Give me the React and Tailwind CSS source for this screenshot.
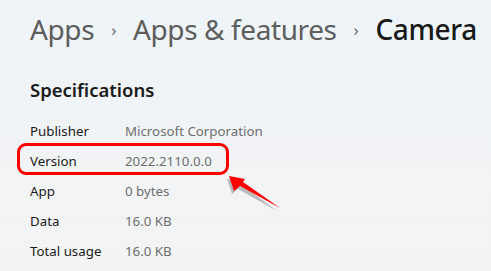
const rows = [
  ["Publisher", "Microsoft Corporation"],
  ["Version", "2022.2110.0.0"],
  ["App", "0 bytes"],
  ["Data", "16.0 KB"],
  ["Total usage", "16.0 KB"],
];

export default function App() {
  return (
    <div
      className="relative w-[491px] h-[271px] overflow-hidden bg-gradient-to-b from-[#eef4f8] to-[#f3f3f3] px-[30px]"
      style={{ fontFamily: '"Noto Sans", "Open Sans", sans-serif' }}
    >
      <div className="flex items-center whitespace-nowrap h-[34px] mt-[12px] text-[28px] leading-none tracking-[-0.4px]">
        <span className="text-[#5d5d5d]">Apps</span>
        <span className="text-[#6b6b6b] text-[17px] mx-[17px]">›</span>
        <span className="text-[#5d5d5d]">Apps &amp; features</span>
        <span className="text-[#6b6b6b] text-[17px] mx-[17px]">›</span>
        <span className="text-[#1a1a1a] font-medium">Camera</span>
      </div>

      <div className="mt-[32px] text-[18.5px] font-semibold text-[#1b1b1b] leading-[23px]">
        Specifications
      </div>

      <div className="mt-[16px] flex flex-col">
        {rows.map(([label, value]) => (
          <div key={label} className="flex items-center h-[30px] text-[13.3px]">
            <span className="w-[95px] text-[#1b1b1b]">{label}</span>
            <span className="text-[#6e6e6e]">{value}</span>
          </div>
        ))}
      </div>

      {/* annotation */}
      <div className="absolute left-[17px] top-[143px] w-[212px] h-[32px] rounded-[9px] border-[3px] border-[#ff0000]" />
      <svg className="absolute left-0 top-0" width="491" height="271">
        <polygon
          points="227,179 232,194 238,189 277,211 241,184 243,181"
          fill="#8a8a8a"
          opacity="0.55"
        />
        <polygon
          points="229,176 234,191 240,186 280,208 243,182 245,179"
          fill="#ff0000"
        />
      </svg>
    </div>
  );
}
